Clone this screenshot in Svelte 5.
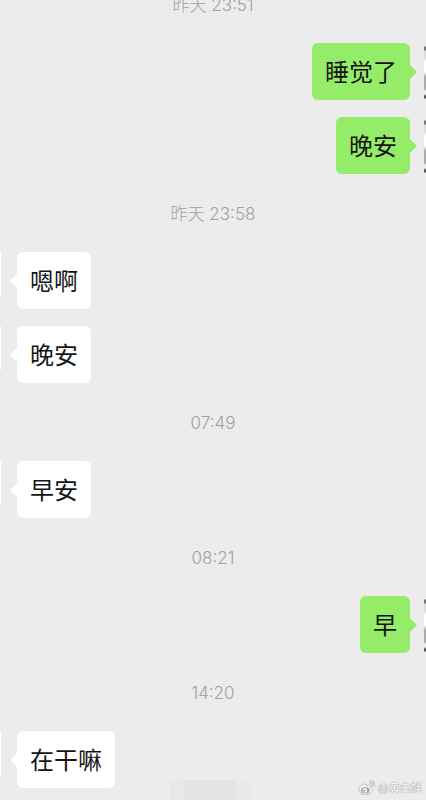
<script>
  const groups = [
    { time: '昨天 23:51', messages: [{ side: 'mine', text: '睡觉了' }, { side: 'mine', text: '晚安' }] },
    { time: '昨天 23:58', messages: [{ side: 'theirs', text: '嗯啊' }, { side: 'theirs', text: '晚安' }] },
    { time: '07:49', messages: [{ side: 'theirs', text: '早安' }] },
    { time: '08:21', messages: [{ side: 'mine', text: '早' }] },
    { time: '14:20', messages: [{ side: 'theirs', text: '在干嘛' }] }
  ];
</script>

<main class="chat">
  {#each groups as group}
    <section class="group">
      <time class="time">{group.time}</time>
      {#each group.messages as message}
        <div class="row {message.side}">
          <span class="avatar"></span>
          <p class="bubble">{message.text}</p>
        </div>
      {/each}
    </section>
  {/each}

  <div class="mosaic"></div>
  <footer class="credit">
    <svg width="18" height="16" viewBox="0 0 18 16" fill="none" aria-hidden="true">
      <path d="M7 4C3.8 4.1.8 7.5.9 10c.1 3 3.3 4.6 6.7 4.5 4.1-.1 7-2.6 6.6-5-.2-1.2-1.1-1.6-1.9-1.8.5-1.8-.7-2.8-3.7-1.6C9 4.7 8.3 4 7 4Z" fill="#fff" stroke="#aaa" stroke-width=".8" />
      <ellipse cx="7.3" cy="10.2" rx="4.6" ry="3.2" fill="#aaa" />
      <circle cx="6.8" cy="10.4" r="2.2" fill="#fff" />
      <circle cx="6.3" cy="10.8" r="1" fill="#888" />
      <path d="M12 1.5c3-.6 5 1.6 4.4 4.5M12.2 3.8c1.4-.3 2.4.7 2.1 2" stroke="#aaa" stroke-width="1.7" stroke-linecap="round" />
      <path d="M12 1.5c3-.6 5 1.6 4.4 4.5M12.2 3.8c1.4-.3 2.4.7 2.1 2" stroke="#fff" stroke-width=".7" stroke-linecap="round" />
    </svg>
    <span>@黄白旭</span>
  </footer>
</main>

<style>
  :global(body) {
    margin: 0;
    background: #ececec;
  }

  .chat {
    position: relative;
    box-sizing: border-box;
    min-height: 100vh;
    padding-bottom: 12px;
    overflow: hidden;
    background: #ececec;
    color: #151515;
    font-family: "Liberation Sans", "Noto Sans CJK SC", sans-serif;
  }

  .group {
    display: flex;
    flex-direction: column;
    margin-top: 30px;
  }

  .group:first-child {
    margin-top: -5px;
  }

  .time {
    margin-bottom: 28px;
    color: #a0a0a0;
    font-family: Inter, "Noto Sans CJK SC", sans-serif;
    font-size: 17px;
    font-weight: 300;
    line-height: 20px;
    text-align: center;
  }

  .row {
    display: flex;
    justify-content: space-between;
  }

  .row + .row {
    margin-top: 17px;
  }

  .mine {
    flex-direction: row-reverse;
  }

  .avatar {
    width: 1px;
    height: 44px;
    background: #fffffa;
  }

  .mine .avatar {
    width: 2px;
    height: 57px;
    background: linear-gradient(#ececec 3px, #777 4px 7px, #ddd 8px 15px, #fff 19px 29px, #aaa 34px 46px, #eee 48px 51px, #555 53px 55px, #ececec 56px);
  }

  .bubble {
    position: relative;
    margin: 0 auto 0 16px;
    padding: 12px 13px 9px;
    border-radius: 6px;
    background: #fff;
    font-size: 24px;
    line-height: 36px;
  }

  .mine .bubble {
    margin: 0 14px 0 auto;
    background: #95ec69;
  }

  .bubble::before {
    position: absolute;
    top: 22px;
    left: -7px;
    width: 7px;
    height: 14px;
    background: inherit;
    clip-path: polygon(100% 0, 0 50%, 100% 100%);
    content: "";
  }

  .mine .bubble::before {
    right: -7px;
    left: auto;
    clip-path: polygon(0 0, 100% 50%, 0 100%);
  }

  .mosaic {
    position: absolute;
    bottom: 0;
    left: 40%;
    width: 27%;
    height: 20px;
    background: linear-gradient(90deg, #e8e8e8 13px, #e4e4e4 14px 66px, #e9e9e9 67px 80px, #ececec 81px);
  }

  .credit {
    position: absolute;
    right: 4px;
    bottom: 3px;
    display: flex;
    align-items: center;
    gap: 2px;
    color: #fff;
    font-size: 11px;
    line-height: 18px;
    text-shadow: 0 0 1px #888, 0 0 1px #888;
  }
</style>
